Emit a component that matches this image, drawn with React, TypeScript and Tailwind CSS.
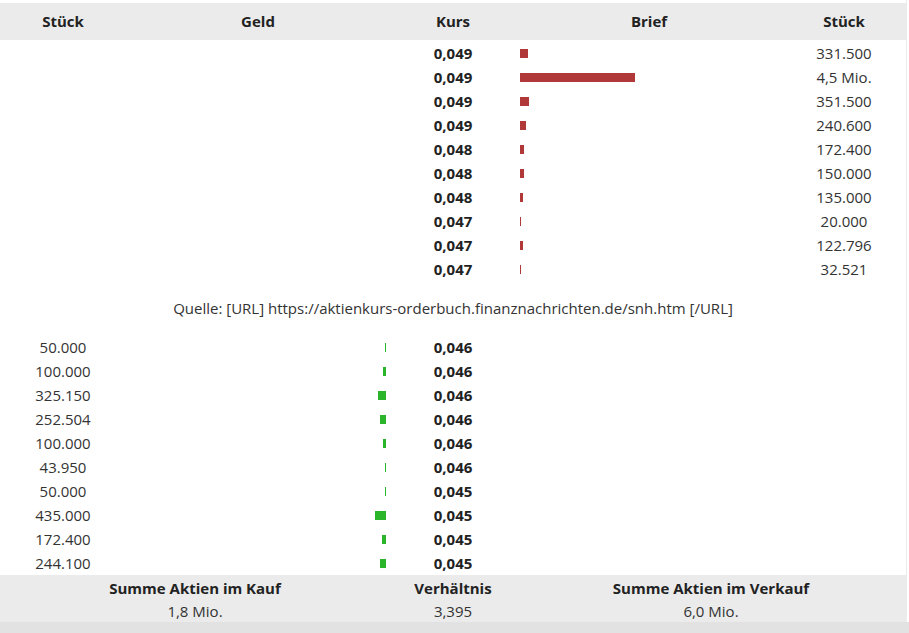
import React from 'react'

type Row = { kurs: string; stueck: string; qty: number }

const MAX = 4500000
const SCALE = 115

const brief: Row[] = [
  { kurs: '0,049', stueck: '331.500', qty: 331500 },
  { kurs: '0,049', stueck: '4,5 Mio.', qty: 4500000 },
  { kurs: '0,049', stueck: '351.500', qty: 351500 },
  { kurs: '0,049', stueck: '240.600', qty: 240600 },
  { kurs: '0,048', stueck: '172.400', qty: 172400 },
  { kurs: '0,048', stueck: '150.000', qty: 150000 },
  { kurs: '0,048', stueck: '135.000', qty: 135000 },
  { kurs: '0,047', stueck: '20.000', qty: 20000 },
  { kurs: '0,047', stueck: '122.796', qty: 122796 },
  { kurs: '0,047', stueck: '32.521', qty: 32521 },
]

const geld: Row[] = [
  { kurs: '0,046', stueck: '50.000', qty: 50000 },
  { kurs: '0,046', stueck: '100.000', qty: 100000 },
  { kurs: '0,046', stueck: '325.150', qty: 325150 },
  { kurs: '0,046', stueck: '252.504', qty: 252504 },
  { kurs: '0,046', stueck: '100.000', qty: 100000 },
  { kurs: '0,046', stueck: '43.950', qty: 43950 },
  { kurs: '0,045', stueck: '50.000', qty: 50000 },
  { kurs: '0,045', stueck: '435.000', qty: 435000 },
  { kurs: '0,045', stueck: '172.400', qty: 172400 },
  { kurs: '0,045', stueck: '244.100', qty: 244100 },
]

const barWidth = (qty: number) => Math.max(1, Math.round((qty / MAX) * SCALE))

const cols = 'grid grid-cols-[126px_264px_126px_266px_124px]'

export default function App() {
  return (
    <div className="w-[909px] h-[633px] bg-white text-[15px] text-[#333] overflow-hidden" style={{ fontFamily: '"Open Sans", sans-serif' }}>
      <div className="flex">
        <div className="w-[906px] pt-[3px]">
          {/* header */}
          <div className={`${cols} h-[37px] items-center bg-[#ebebeb] font-bold text-[#222]`}>
            <div className="text-center">Stück</div>
            <div className="text-center">Geld</div>
            <div className="text-center">Kurs</div>
            <div className="text-center">Brief</div>
            <div className="text-center">Stück</div>
          </div>

          {/* ask side */}
          <div className="pt-px">
            {brief.map((r, i) => (
              <div key={i} className={`${cols} h-6 items-center`}>
                <div />
                <div />
                <div className="text-center font-bold text-[#222]">{r.kurs}</div>
                <div className="px-1 flex">
                  <div className="h-[9px] bg-[#b13838]" style={{ width: barWidth(r.qty) }} />
                </div>
                <div className="text-center">{r.stueck}</div>
              </div>
            ))}
          </div>

          <div className="h-[54px] flex items-center justify-center">
            Quelle: [URL] https://aktienkurs-orderbuch.finanznachrichten.de/snh.htm [/URL]
          </div>

          {/* bid side */}
          <div>
            {geld.map((r, i) => (
              <div key={i} className={`${cols} h-6 items-center`}>
                <div className="text-center">{r.stueck}</div>
                <div className="px-1 flex justify-end">
                  <div className="h-[9px] bg-[#2bb52b]" style={{ width: barWidth(r.qty) }} />
                </div>
                <div className="text-center font-bold text-[#222]">{r.kurs}</div>
                <div />
                <div />
              </div>
            ))}
          </div>

          {/* totals */}
          <div className="grid grid-cols-[390px_126px_390px] bg-[#ebebeb] h-[47px] pt-px">
            <div className="flex flex-col items-center">
              <div className="h-6 leading-6 font-bold text-[#222]">Summe Aktien im Kauf</div>
              <div className="h-[22px] leading-[22px]">1,8 Mio.</div>
            </div>
            <div className="flex flex-col items-center">
              <div className="h-6 leading-6 font-bold text-[#222]">Verhältnis</div>
              <div className="h-[22px] leading-[22px]">3,395</div>
            </div>
            <div className="flex flex-col items-center">
              <div className="h-6 leading-6 font-bold text-[#222]">Summe Aktien im Verkauf</div>
              <div className="h-[22px] leading-[22px]">6,0 Mio.</div>
            </div>
          </div>
        </div>
        <div className="w-px bg-[#ececec]" />
      </div>
      <div className="h-[11px] bg-[#e2e2e2]" />
    </div>
  )
}
